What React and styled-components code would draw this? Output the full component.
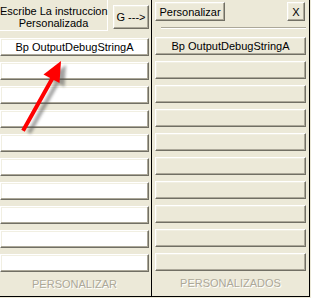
import React from 'react';
import styled, { createGlobalStyle } from 'styled-components';

const Global = createGlobalStyle`
  html, body { margin: 0; padding: 0; background: #ECE9D8; }
  body { font-family: "Liberation Sans", Arial, sans-serif; font-size: 11px; color: #000; }
  * { box-sizing: border-box; }
`;

const Window = styled.div`
  position: relative;
  display: flex;
  width: 310px;
  height: 297px;
  border-right: 1px solid #000;
  border-bottom: 1px solid #000;
  background: #ECE9D8;
  overflow: hidden;
`;

const Panel = styled.section`
  display: flex;
  flex-direction: column;
  width: ${(p) => p.$w}px;
  flex: none;
  padding: ${(p) => p.$pad};
  border-right: ${(p) => (p.$divider ? '1px solid #000' : 'none')};
`;

const Header = styled.div`
  display: flex;
  align-items: flex-start;
  justify-content: space-between;
  height: ${(p) => p.$h}px;
  padding-top: ${(p) => p.$top || 0}px;
`;

const Prompt = styled.div`
  width: 108px;
  height: 31px;
  border-right: 1px solid #fff;
  border-bottom: 1px solid #fff;
  text-align: center;
  line-height: 12px;
  padding-top: 5px;
  white-space: nowrap;
`;

const Button = styled.button`
  display: flex;
  align-items: center;
  justify-content: center;
  width: ${(p) => p.$w}px;
  height: ${(p) => p.$h}px;
  margin-top: ${(p) => p.$mt || 0}px;
  margin-right: ${(p) => p.$mr || 0}px;
  padding: 0;
  font: inherit;
  color: #000;
  white-space: nowrap;
  background: ${(p) => (p.$white ? '#FFFFFF' : '#ECE9D8')};
  border: 1px solid;
  border-color: #FFFFFF #716F64 #716F64 #FFFFFF;
  box-shadow: inset -1px -1px #ACA899, inset 1px 1px #F1EFE2;
  border-radius: 0;
`;

const Separator = styled.div`
  margin: 7px 3px 0 6px;
  height: 2px;
  border-top: 1px solid #ACA899;
  border-bottom: 1px solid #FFFFFF;
`;

const Rows = styled.div`
  display: flex;
  flex-direction: column;
  gap: 6px;
  margin-top: ${(p) => p.$mt}px;
`;

const Row = styled(Button)`
  width: ${(p) => p.$w}px;
  height: 18px;
`;

const Caption = styled.div`
  margin-top: 6px;
  text-align: center;
  color: #ACA899;
  text-shadow: 1px 1px #FFFFFF;
  line-height: 13px;
  margin-right: ${(p) => p.$mr || 0}px;
`;

const ArrowLayer = styled.svg`
  position: absolute;
  left: 0;
  top: 0;
  pointer-events: none;
`;

const leftRows = ['Bp OutputDebugStringA', '', '', '', '', '', '', '', '', ''];
const rightRows = ['Bp OutputDebugStringA', '', '', '', '', '', '', '', '', ''];

function Arrow() {
  const shaft = 'M24 129 L52 79';
  const head = 'M61 61 L43.5 74.5 L59.5 83 Z';
  return (
    <ArrowLayer width="120" height="160" viewBox="0 0 120 160">
      <defs>
        <filter id="blur" x="-20%" y="-20%" width="140%" height="140%">
          <feGaussianBlur stdDeviation="1.6" />
        </filter>
      </defs>
      <g transform="translate(5 4)" filter="url(#blur)" opacity="0.55">
        <path d={shaft} stroke="#555" strokeWidth="4" fill="none" />
        <path d={head} fill="#555" />
      </g>
      <path d={shaft} stroke="#FF0000" strokeWidth="4" fill="none" strokeLinecap="square" />
      <path d={head} fill="#FF0000" />
    </ArrowLayer>
  );
}

export default function App() {
  return (
    <>
      <Global />
      <Window>
        <Panel $w={152} $pad="0 2px 0 0" $divider>
          <Header $h={38}>
            <Prompt>
              Escribe La instruccion
              <br />
              Personalizada
            </Prompt>
            <Button $w={36} $h={24} $mt={5}>G ---&gt;</Button>
          </Header>
          <Rows $mt={0}>
            {leftRows.map((t, i) => (
              <Row key={i} $w={149} $white>{t}</Row>
            ))}
          </Rows>
          <Caption>PERSONALIZAR</Caption>
        </Panel>
        <Panel $w={157} $pad="0 0 0 3px">
          <Header $h={20} $top={2}>
            <Button $w={70} $h={19}>Personalizar</Button>
            <Button $w={18} $h={19} $mr={4}>X</Button>
          </Header>
          <Separator />
          <Rows $mt={8}>
            {rightRows.map((t, i) => (
              <Row key={i} $w={151}>{t}</Row>
            ))}
          </Rows>
          <Caption $mr={3}>PERSONALIZADOS</Caption>
        </Panel>
        <Arrow />
      </Window>
    </>
  );
}
